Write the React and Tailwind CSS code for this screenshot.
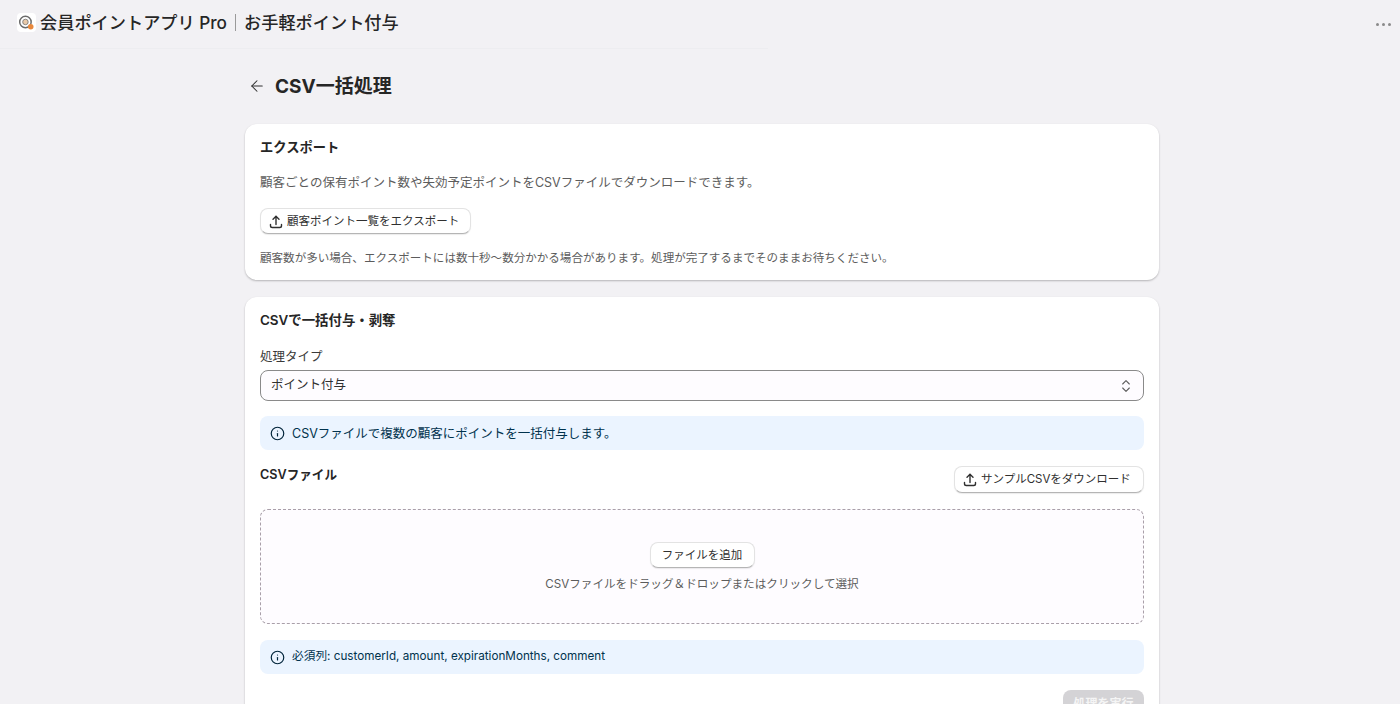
import { ArrowLeft, ChevronsUpDown, Info } from 'lucide-react';

const FONT = "font-['Inter','Noto_Sans_CJK_JP',sans-serif]";

function OutlineButton({ icon, children, className = '' }) {
  return (
    <button className={`flex items-center gap-[3px] h-[26px] rounded-lg bg-white border border-[#e3e3e3] border-b-[#b5b5b5] shadow-[0_1px_1px_rgba(0,0,0,0.08)] text-[11.5px] text-[#303030] ${className}`}>
      {icon && <UploadIcon />}
      {children}
    </button>
  );
}

function UploadIcon() {
  return (
    <svg width="16" height="16" viewBox="0 0 16 16" fill="none" stroke="#303030" strokeWidth="1.4" strokeLinecap="round" strokeLinejoin="round">
      <path d="M8 10.5V2.5" />
      <path d="M5 5.2 8 2.3l3 2.9" />
      <path d="M2.5 10.5v1.2c0 1 .8 1.8 1.8 1.8h7.4c1 0 1.8-.8 1.8-1.8v-1.2" />
    </svg>
  );
}

function InfoBanner({ children, className = '' }) {
  return (
    <div className={`flex items-center gap-[7px] h-[34px] px-[10px] rounded-lg bg-[#ebf4ff] text-[#00324d] ${className}`}>
      <Info size={15} strokeWidth={1.9} className="text-[#00243a] shrink-0" />
      {children}
    </div>
  );
}

export default function App() {
  return (
    <div className={`${FONT} h-[704px] overflow-hidden bg-[#f2f1f4] text-[#303030]`}>
      {/* app title bar */}
      <header className="flex items-center justify-between h-[48px] pl-[17px] pr-[9px]">
        <div className="flex items-center gap-[4px] pb-[2px] text-[17.2px] font-medium text-[#262626]">
          <div className="flex items-center justify-center w-[19px] h-[19px] rounded-[4px] bg-white">
            <svg width="17" height="17" viewBox="0 0 16 16" fill="none">
              <circle cx="7" cy="7.5" r="5.4" stroke="#6b6b6b" strokeWidth="1.4" />
              <circle cx="7" cy="7.5" r="2.6" fill="#e9c9a8" stroke="#777" strokeWidth="0.8" />
              <circle cx="12" cy="12" r="2.6" fill="#e8883d" />
            </svg>
          </div>
          <span>会員ポイントアプリ Pro</span>
          <span className="w-px h-[17px] mx-[4px] bg-[#9a9a9a]" />
          <span>お手軽ポイント付与</span>
        </div>
        <div className="flex gap-[3px]">
          <span className="w-[3px] h-[3px] rounded-full bg-[#8a8a8a]" />
          <span className="w-[3px] h-[3px] rounded-full bg-[#8a8a8a]" />
          <span className="w-[3px] h-[3px] rounded-full bg-[#8a8a8a]" />
        </div>
      </header>
      <div className="w-[768px] h-px bg-[#ededf0]" />

      <main className="w-[914px] ml-[245px]">
        <div className="flex items-center gap-[9px] h-[37px] mt-[19px] pl-[3px]">
          <ArrowLeft size={18} strokeWidth={1.4} className="text-[#303030] -mt-px" />
          <h1 className="pt-[2px] text-[19px] font-bold text-[#262626]">CSV一括処理</h1>
        </div>

        <section className="mt-[19px] h-[156px] rounded-xl bg-white shadow-[0_1px_2px_rgba(0,0,0,0.25)] px-[15px] pt-[14px]">
          <h2 className="text-[13.3px] font-semibold leading-[18px] text-[#262626]">エクスポート</h2>
          <p className="mt-[18px] text-[12.5px] leading-[18px] text-[#5c5c5c]">顧客ごとの保有ポイント数や失効予定ポイントをCSVファイルでダウンロードできます。</p>
          <OutlineButton icon className="mt-[16px] w-[211px] pl-[7px] pt-px">顧客ポイント一覧をエクスポート</OutlineButton>
          <p className="mt-[15px] text-[11.55px] leading-[18px] text-[#5c5c5c]">顧客数が多い場合、エクスポートには数十秒〜数分かかる場合があります。処理が完了するまでそのままお待ちください。</p>
        </section>

        <section className="mt-[17px] h-[500px] rounded-xl bg-white shadow-[0_1px_2px_rgba(0,0,0,0.25)] px-[15px] pt-[14px]">
          <h2 className="text-[13.4px] font-semibold leading-[18px] text-[#262626]">CSVで一括付与・剥奪</h2>

          <label className="block mt-[19px] text-[12.5px] leading-[18px] text-[#3a3a3a]">処理タイプ</label>
          <div className="flex items-center justify-between h-[31px] mt-[4px] pl-[10px] pr-[9px] rounded-lg bg-[#fefcff] border border-[#8a8a8a] text-[12.5px]">
            <span>ポイント付与</span>
            <ChevronsUpDown size={16} strokeWidth={1.6} className="text-[#5c5c5c]" />
          </div>

          <InfoBanner className="mt-[15px]"><span className="pt-[2px] text-[12.5px]">CSVファイルで複数の顧客にポイントを一括付与します。</span></InfoBanner>

          <div className="flex items-start justify-between mt-[16px]">
            <h3 className="text-[12.6px] font-semibold leading-[18px] text-[#262626]">CSVファイル</h3>
            <OutlineButton icon className="h-[27px] w-[190px] pl-[7px]">サンプルCSVをダウンロード</OutlineButton>
          </div>

          <div className="flex flex-col items-center h-[115px] mt-[16px] pt-[32px] rounded-lg bg-[#fefcff] border border-dashed border-[#a99fa9]">
            <OutlineButton className="justify-center w-[105px] pt-px">ファイルを追加</OutlineButton>
            <p className="mt-[7px] text-[11.6px] leading-[18px] text-[#5c5c5c]">CSVファイルをドラッグ＆ドロップまたはクリックして選択</p>
          </div>

          <InfoBanner className="mt-[16px]"><span className="pb-[1px] text-[11.7px]">必須列: customerId, amount, expirationMonths, comment</span></InfoBanner>

          <div className="flex justify-end mt-[16px]">
            <button className="w-[81px] h-[28px] rounded-lg bg-[#d4d3d6] text-[12px] font-semibold text-[#f5f5f5]">処理を実行</button>
          </div>
        </section>
      </main>
    </div>
  );
}
